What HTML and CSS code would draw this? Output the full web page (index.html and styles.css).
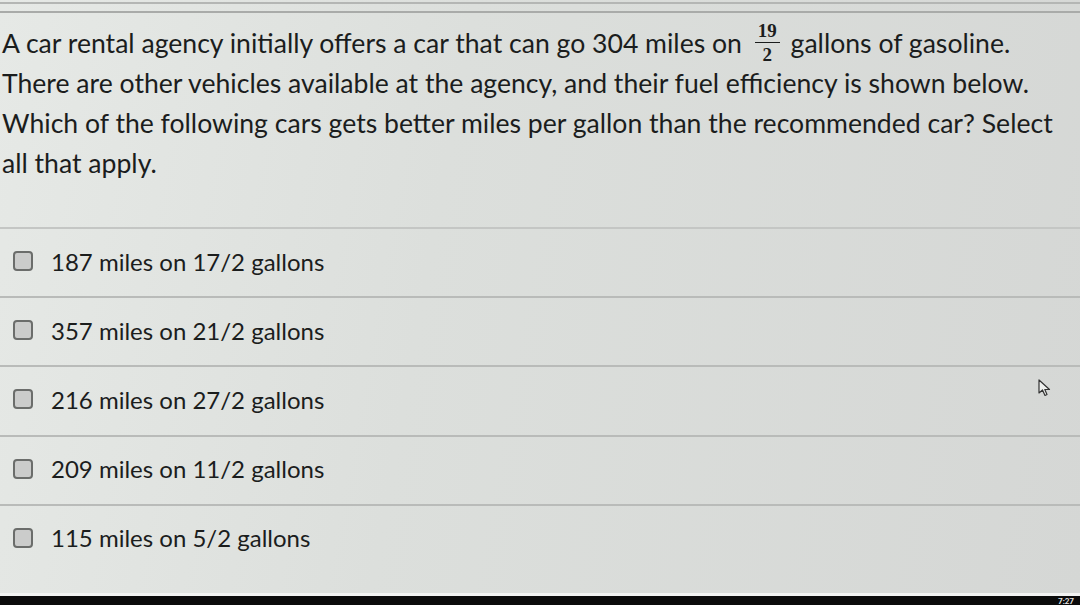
FILE: index.html
```html
<!DOCTYPE html>
<html lang="en">
<head>
    <meta charset="UTF-8">
    <meta name="viewport" content="width=device-width, initial-scale=1.0">
    <title>Question</title>
    <link rel="stylesheet" href="styles.css">
</head>
<body>
    <main class="screen">
        <div class="top-rule"></div>

        <!-- question stem -->
        <p class="question">
            A car rental agency initially offers a car that can go 304 miles on
            <span class="frac"><span class="num">19</span><span class="den">2</span></span>
            gallons of gasoline.<br>
            There are other vehicles available at the agency, and their fuel efficiency is shown below.<br>
            Which of the following cars gets better miles per gallon than the recommended car? Select<br>
            all that apply.
        </p>

        <ul class="choices">
            <li><span class="box"></span>187 miles on 17/2 gallons</li>
            <li><span class="box"></span>357 miles on 21/2 gallons</li>
            <li><span class="box"></span>216 miles on 27/2 gallons
                <svg class="cursor" width="14" height="18" viewBox="0 0 14 18">
                    <path d="M1 1 L1 14 L4.5 11 L7 16.5 L9 15.5 L6.8 10.5 L11.5 10.5 Z" fill="#eef0ee" stroke="#333" stroke-width="1.2" stroke-linejoin="round"/>
                </svg>
            </li>
            <li><span class="box"></span>209 miles on 11/2 gallons</li>
            <li><span class="box"></span>115 miles on 5/2 gallons</li>
        </ul>

        <footer class="taskbar"><span class="clock">7:27</span></footer>
    </main>
</body>
</html>
```

FILE: styles.css
```css
* {
    box-sizing: border-box;
}

body {
    margin: 0;
    font-family: Lato, "Open Sans", sans-serif;
    color: #1b1d1d;
}

.screen {
    width: 1080px;
    height: 605px;
    display: flex;
    flex-direction: column;
    background: linear-gradient(100deg, #e6e9e6 0%, #dcdfdc 40%, #d5d7d5 100%);
    overflow: hidden;
}

/* double rule along the top edge */
.top-rule {
    height: 11px;
    margin-top: 2px;
    border-top: 2px solid #b4b6b4;
    border-bottom: 2px solid #a9aba9;
}

.question {
    margin: 10px 0 0;
    padding-left: 2px;
    font-size: 26.6px;
    line-height: 40px;
    height: 204px;
}

.frac {
    display: inline-flex;
    flex-direction: column;
    align-items: center;
    vertical-align: middle;
    font-family: "Liberation Serif", serif;
    font-weight: bold;
    font-size: 19px;
    line-height: 17px;
    margin: -20px 4px -12px 6px;
}

.frac .num {
    border-bottom: 1.5px solid #1b1d1d;
    padding: 0 3px 3px;
}

.frac .den {
    padding-top: 3px;
}

.choices {
    list-style: none;
    margin: 0;
    padding: 0;
    flex: 1;
}

.choices li {
    display: flex;
    align-items: center;
    height: 69.2px;
    padding-left: 13px;
    padding-bottom: 3px;
    border-top: 2px solid #b9bbb9;
    font-size: 24px;
    position: relative;
}

.choices li:first-child {
    border-top-color: #c4c6c4;
}

.box {
    width: 20px;
    height: 20px;
    margin-right: 18px;
    border: 2px solid #6b6d6b;
    border-radius: 4px;
    background: #cbcccb;
    flex-shrink: 0;
}

.cursor {
    position: absolute;
    left: 1038px;
    top: 12px;
}

.taskbar {
    height: 12px;
    background: #0b0b0b;
    border-top: 3px solid #f2f3f2;
    display: flex;
    justify-content: flex-end;
    align-items: center;
    padding-right: 6px;
}

.clock {
    color: #e8e8e8;
    font-size: 8px;
    font-weight: bold;
}
```
